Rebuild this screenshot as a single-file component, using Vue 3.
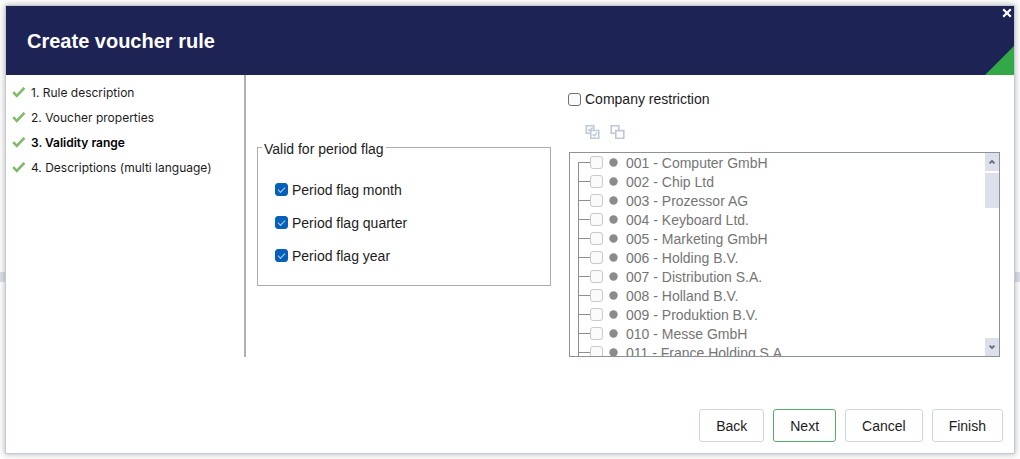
<script setup>
import { ref } from 'vue'

const steps = [
  '1. Rule description',
  '2. Voucher properties',
  '3. Validity range',
  '4. Descriptions (multi language)',
]
const current = 2

const periods = ref([
  { id: 'month', label: 'Period flag month', checked: true },
  { id: 'quarter', label: 'Period flag quarter', checked: true },
  { id: 'year', label: 'Period flag year', checked: true },
])

const restricted = ref(false)
const companies = [
  '001 - Computer GmbH',
  '002 - Chip Ltd',
  '003 - Prozessor AG',
  '004 - Keyboard Ltd.',
  '005 - Marketing GmbH',
  '006 - Holding B.V.',
  '007 - Distribution S.A.',
  '008 - Holland B.V.',
  '009 - Produktion B.V.',
  '010 - Messe GmbH',
  '011 - France Holding S.A.',
]
</script>

<template>
  <div class="backdrop">
    <div class="band"></div>
    <section class="dialog" role="dialog" aria-labelledby="dialog-title">
      <header class="header">
        <h1 id="dialog-title">Create voucher rule</h1>
        <button class="close" type="button" aria-label="Close">
          <svg width="10" height="10" viewBox="0 0 10 10"><path d="M1.2 1.2L8.8 8.8M8.8 1.2L1.2 8.8" stroke="#fff" stroke-width="2.2" /></svg>
        </button>
        <svg class="corner" width="29" height="29" viewBox="0 0 29 29"><path d="M29 0V29H0Z" fill="#32a946" /></svg>
      </header>

      <div class="body">
        <nav class="steps">
          <ol>
            <li v-for="(step, i) in steps" :key="step" :class="{ current: i === current }">
              <svg width="14" height="12" viewBox="0 0 14 12"><path d="M1.2 5.2L4.8 8.8L12.4 0.8" fill="none" stroke="#7fbb6a" stroke-width="2.6" /></svg>
              <span>{{ step }}</span>
            </li>
          </ol>
        </nav>

        <div class="periods">
          <fieldset>
            <legend>Valid for period flag</legend>
            <label v-for="p in periods" :key="p.id" class="option">
              <input v-model="p.checked" type="checkbox" />
              <span>{{ p.label }}</span>
            </label>
          </fieldset>
        </div>

        <div class="companies">
          <label class="option">
            <input v-model="restricted" type="checkbox" />
            <span>Company restriction</span>
          </label>
          <div class="tools">
            <button type="button" aria-label="Select all" disabled>
              <svg width="15" height="14" viewBox="0 0 15 14" fill="none" stroke="#bdc9d9" stroke-width="1.5"><path d="M5.5 8.3H1.2V.8H8.8V5M5.8 5.6H13.8V13.2H5.8ZM2.8 4.2L4.5 5.8L7.6 2.5M7.6 9.3L9.3 11L12.3 7.6" /></svg>
            </button>
            <button type="button" aria-label="Select none" disabled>
              <svg width="15" height="14" viewBox="0 0 15 14" fill="none" stroke="#bdc9d9" stroke-width="1.6"><path d="M5.5 8.3H1.2V.8H8.8V5M5.8 5.6H13.8V13.2H5.8Z" /></svg>
            </button>
          </div>
          <div class="tree">
            <ul>
              <li v-for="c in companies" :key="c">
                <label>
                  <input type="checkbox" :disabled="!restricted" />
                  <svg width="9" height="9" viewBox="0 0 9 9"><circle cx="4.5" cy="4.5" r="4.2" fill="#8b8b8b" /></svg>
                  <span>{{ c }}</span>
                </label>
              </li>
            </ul>
            <div class="scrollbar">
              <button type="button" aria-label="Scroll up">
                <svg width="8" height="6" viewBox="0 0 8 6"><path d="M1.5 4.3L4 2L6.5 4.3" fill="none" stroke="#5f6b85" stroke-width="1.8" /></svg>
              </button>
              <div class="thumb"></div>
              <button type="button" class="down" aria-label="Scroll down">
                <svg width="8" height="6" viewBox="0 0 8 6"><path d="M1.5 1.7L4 4L6.5 1.7" fill="none" stroke="#5f6b85" stroke-width="1.8" /></svg>
              </button>
            </div>
          </div>
        </div>
      </div>

      <footer class="footer">
        <button type="button">Back</button>
        <button type="button" class="primary">Next</button>
        <button type="button">Cancel</button>
        <button type="button">Finish</button>
      </footer>
    </section>
  </div>
</template>

<style>
body {
  background: #fdfdfd;
}
</style>

<style scoped>
* {
  box-sizing: border-box;
}
.backdrop {
  position: relative;
  display: flex;
  height: 100vh;
  padding: 5px;
  font: 14px/18px "Liberation Sans", Arial, sans-serif;
  color: #1c1c1c;
}
.band {
  position: absolute;
  left: 0;
  right: 0;
  top: 60%;
  height: 10px;
  margin-top: -3px;
  background: #dcdfe9;
}
.dialog {
  position: relative;
  flex: 1;
  min-width: 0;
  display: flex;
  flex-direction: column;
  background: #fff;
  border: 1px solid #c3cad5;
  box-shadow: 0 0 6px rgba(0, 0, 0, 0.3);
}
.header {
  position: relative;
  display: flex;
  align-items: center;
  padding: 24px 21px 22px;
  background: #1d2355;
}
h1 {
  margin: 0;
  font-size: 20px;
  line-height: 23px;
  color: #fff;
}
button {
  font: inherit;
  color: inherit;
}
.close {
  position: absolute;
  top: 2px;
  right: 2px;
  display: flex;
  padding: 0;
  border: 0;
  background: none;
}
.corner {
  position: absolute;
  right: 0;
  bottom: 0;
}
.body {
  flex: 1;
  min-height: 0;
  display: grid;
  grid-template-columns: 240px 316fr 452fr;
  grid-template-rows: minmax(0, 1fr);
}
.steps {
  border-right: 2px solid #b0b0b0;
  font: 12px/25px Inter, sans-serif;
}
ol,
ul {
  list-style: none;
  margin: 0;
  padding: 0;
}
ol {
  padding: 5px 6px;
}
ol li {
  display: flex;
  align-items: center;
  gap: 5px;
}
.current {
  font-weight: 600;
  color: #000;
}
.periods {
  padding: 63px 11px 0;
}
fieldset {
  margin: 0;
  padding: 16px 17px 13px;
  border: 1px solid #adadad;
}
legend {
  margin-left: -13px;
  padding: 3px 2px 0;
  line-height: 16px;
}
.option {
  display: flex;
  align-items: center;
  gap: 4px;
}
fieldset .option {
  height: 33px;
}
input {
  appearance: none;
  flex: none;
  width: 13px;
  height: 13px;
  margin: 0;
  border: 1px solid #6f6f6f;
  border-radius: 3px;
  background: #fafafa;
}
input:checked {
  border-color: #0560b9;
  background: #0560b9;
  display: grid;
  place-items: center;
}
input:checked::after {
  content: "";
  width: 6px;
  height: 3px;
  margin-bottom: 2px;
  border: solid #b4d0ec;
  border-width: 0 0 1px 1px;
  transform: rotate(-45deg);
}
input:disabled {
  border-color: #c9c9c9;
}
.companies {
  display: flex;
  flex-direction: column;
  padding: 15px 14px 0 6px;
}
.tools {
  display: flex;
  gap: 10px;
  padding: 17px 17px 13px;
}
.tools button {
  display: flex;
  padding: 0;
  border: 0;
  background: none;
}
.tree {
  flex: 1;
  min-height: 0;
  display: flex;
  margin-left: 1px;
  border: 1px solid #8c929b;
  overflow: hidden;
}
.tree ul {
  flex: 1;
  height: 100%;
  padding-left: 8px;
  overflow: hidden;
  color: #757575;
}
.tree li {
  display: flex;
  align-items: center;
  height: 19px;
  border-left: 1px solid #8f8f8f;
}
.tree li:first-child {
  border-image: linear-gradient(transparent 50%, #8f8f8f 50%) 1;
  border-width: 0 0 0 1px;
}
.tree li::before {
  content: "";
  width: 11px;
  height: 1px;
  background: #8f8f8f;
}
.tree label {
  display: flex;
  align-items: center;
}
.tree label svg {
  margin: 0 8px 0 6px;
}
.scrollbar {
  display: flex;
  flex-direction: column;
  gap: 2px;
  width: 14px;
}
.scrollbar button {
  display: grid;
  place-items: center;
  height: 18px;
  padding: 0;
  border: 0;
  background: #dde0ea;
}
.thumb {
  height: 35px;
  background: #dde0ea;
}
.scrollbar .down {
  margin-top: auto;
}
.footer {
  display: flex;
  justify-content: flex-end;
  gap: 9px;
  padding: 52px 11px 11px;
}
.footer button {
  height: 33px;
  padding: 0 16px;
  border: 1px solid #cdd5e3;
  border-radius: 3px;
  background: #fff;
}
.footer .primary {
  border-color: #58aa68;
}
</style>
